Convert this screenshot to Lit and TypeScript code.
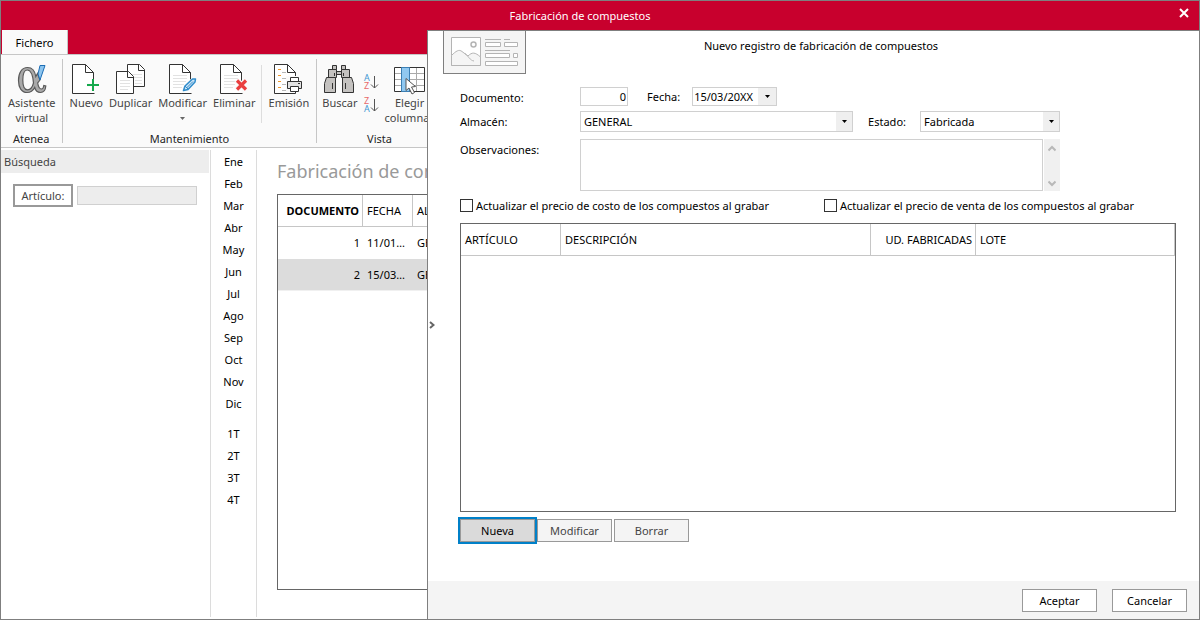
import { LitElement, html, svg, css } from "lit";
import { customElement, state } from "lit/decorators.js";

const openPage = svg`<path class="fill" d="M.5 .5h13l8 8v21h-21z"/><path class="ink" d="M21.5 17V8.5l-8-8H.5v29h22M13.5 .5v8h8"/>`;
const ruled = svg`<path class="rule" d="M4 11.5h14M4 14.5h14M4 17.5h13M4 20.5h11M4 23.5h9"/>`;

const icons: Record<string, unknown> = {
  alpha: html`<svg width="30" height="31" viewBox="0 0 30 31" aria-hidden="true">
    <path d="M10.500 3.500C15.500 3.500 18 7 18.800 12.500L20.500 9.500L23 16L20.700 19C21.300 23 22.500 25 24.500 25C26 25 26.500 24 26.800 21.500L28.800 22C28.500 26 26.500 28.500 23.500 28.500C20 28.500 18.500 26.500 17.700 23.500C16 26.800 13.500 28.500 10 28.500C4.500 28.500 1.500 23.500 1.500 16.500C1.500 8.500 5 3.500 10.500 3.500zM10.200 6C7 6 5.800 10 5.800 16C5.800 22 7.300 25.800 10.500 25.800C13.500 25.800 15.500 23 16.500 19C15.800 11 14.500 6 10.200 6z" fill="#a9a9a9" stroke="#5a5a5a" stroke-width="1.200" fill-rule="evenodd"/>
    <path d="M23 1.500h5L23 16l-2-6z" fill="#8cc4ee" stroke="#1c6db5"/>
  </svg>`,
  nuevo: html`<svg width="28" height="31" viewBox="0 0 28 31" aria-hidden="true">${openPage}
    <path d="M21 15v12M15 21h12" fill="none" stroke="#fafafa" stroke-width="4"/>
    <path d="M21 15v12M15 21h12" fill="none" stroke="#14a84b" stroke-width="2"/></svg>`,
  duplicar: html`<svg width="30" height="31" viewBox="0 0 30 31" aria-hidden="true">
    <path class="sheet" d="M11.500 .5h12l5 5v17h-17z"/><path class="ink" d="M22.500 .5v6h6"/>
    <path class="rule" d="M16 10.500h10M16 13.500h10M19 16.500h7M19 19.500h7"/>
    <path class="sheet" d="M.5 7.500h12l5 5v17h-17z"/><path class="ink" d="M11.500 7.500v6h6"/>
    <path class="rule" d="M4 16.500h10M4 19.500h10M4 22.500h10M4 25.500h8"/></svg>`,
  modificar: html`<svg width="28" height="31" viewBox="0 0 28 31" aria-hidden="true">${openPage}${ruled}
    <path d="M14.500 27l1.500-5 8-7 2.500 2.500-7.500 8z" fill="#fafafa" stroke="#fafafa" stroke-width="3"/>
    <path d="M14.500 26.500l1.500-4.500 7.500-7h3l-.5 3-7 7.500z" fill="#cfe6f7" stroke="#2f8ccb" stroke-width="1.500" stroke-linejoin="round"/>
    <path d="M17.500 24l6.500-6.500M16 22l3 3" stroke="#2f8ccb"/></svg>`,
  eliminar: html`<svg width="28" height="31" viewBox="0 0 28 31" aria-hidden="true">${openPage}${ruled}
    <path d="M16.500 16l10 10M26.500 16l-10 10" stroke="#fafafa" stroke-width="6"/>
    <path d="M17 16.500l9 9M26 16.500l-9 9" stroke="#ea3f3f" stroke-width="3.200"/></svg>`,
  emision: html`<svg width="29" height="31" viewBox="0 0 29 31" aria-hidden="true">
    <path class="sheet" d="M.5 .5h13l8 8v21h-21z"/><path class="ink" d="M13.500 .5v8h8"/>
    <path stroke="#f0992c" d="M4 5.500h3M4 11.500h3M4 17.500h3M4 23.500h3"/>
    <path class="rule dark" d="M8 8.500h4M8 14.500h6M8 20.500h4M8 26.500h4"/>
    <path d="M12 12h17v16h-17z" fill="#fafafa"/>
    <g fill="#fff" stroke="#333"><path d="M16.500 18v-4.500h8V18"/><path d="M13.500 17.500h14v7h-14z" fill="#e2e2e2"/><path d="M16.500 22.500h8v5h-8z"/><path d="M24 19.500h2"/></g></svg>`,
  buscar: html`<svg width="31" height="31" viewBox="0 0 31 31" aria-hidden="true">
    <g fill="#c4c2c0" stroke="#333"><path d="M12.500 7.500h5v3h-5z"/><path d="M8.500 1.500h4v4h-4zM17.500 1.500h4v4h-4z"/><path d="M4.500 5.500h8v8h-8zM17.500 5.500h8v8h-8z"/>
    <path d="M2.500 13.500h9v15H.5v-9zM27.500 13.500h-9v15h11v-9z"/><path d="M8.500 19v6M21.500 19v6M10.500 9v3M19.500 9v3"/></g></svg>`,
  columnas: html`<svg width="31" height="31" viewBox="0 0 31 31" aria-hidden="true">
    <path fill="#fff" d="M.5 3.500h30v24H.5z"/>
    <path class="grid" d="M1 9.500h29M1 15.500h29M1 21.500h29M22.500 4v23"/>
    <path class="ink" d="M.5 3.500h30v24H.5z"/>
    <path fill="#90c8f0" stroke="#3a7fb5" d="M7.500 3.500h8v24h-8z"/>
    <path fill="#fff" stroke="#555" d="M12 14.500v12l3-2.500 3 6 2.500-1.500-3-5.500 4-.5z"/></svg>`,
};

const sortIcon = (top: string, bottom: string) => {
  const tint = (c: string) => (c === "A" ? "#3f97d3" : "#e8696b");
  return html`<svg class="sort" width="15" height="18" viewBox="0 0 15 18" aria-hidden="true">
    <text x="0" y="8" font-size="9" fill=${tint(top)}>${top}</text>
    <text x="0" y="16" font-size="9" fill=${tint(bottom)}>${bottom}</text>
    <path d="M10.500 3v12M7 11.500l3.500 3.500 3.500-3.500" fill="none" stroke="#555"/></svg>`;
};

const caret = html`<svg class="caret" width="5" height="3" viewBox="0 0 5 3" aria-hidden="true"><path d="M0 0h5L2.500 3z"/></svg>`;

const MONTHS = ["Ene", "Feb", "Mar", "Abr", "May", "Jun", "Jul", "Ago", "Sep", "Oct", "Nov", "Dic"];
const QUARTERS = ["1T", "2T", "3T", "4T"];

@customElement("app-root")
export class AppRoot extends LitElement {
  @state() private selected = 2;
  private rows = [
    { id: 1, date: "11/01/20XX", store: "GENERAL" },
    { id: 2, date: "15/03/20XX", store: "GENERAL" },
  ];

  static styles = css`
    :host { display: block; font: 11px/15px "Noto Sans", "Open Sans", sans-serif; color: #000; }
    * { box-sizing: border-box; }
    button, input, select, textarea { font: inherit; color: inherit; margin: 0; border-radius: 0; }
    button { padding: 0; border: 0; background: none; }
    svg { display: block; flex: none; }
    .window { display: flex; flex-direction: column; height: 100vh; border: 1px solid #7f7f7f; background: #fff; }
    .titlebar { display: flex; align-items: center; height: 29px; flex: none; background: #c8002d; color: #fff; }
    .titlebar h1 { flex: 1; margin: 0; font: inherit; text-align: center; }
    .close { width: 40px; height: 24px; display: grid; place-items: center; align-self: start; padding-left: 9px; }
    .body { flex: 1; display: flex; min-height: 0; }

    .main { flex: 0 0 426px; min-width: 0; overflow: hidden; display: flex; flex-direction: column; }
    .tabs { background: #c8002d; height: 24px; flex: none; display: flex; padding-left: 1px; }
    .tab { width: 66px; height: 25px; background: #fafafa; border-right: 1px solid #c6c6c6; }
    .ribbon { display: flex; flex: none; height: 94px; border-top: 1px solid #c6c6c6; border-bottom: 1px solid #c6c6c6; background: #fafafa; }
    .group { display: flex; flex-direction: column; flex: none; margin: 4px 0; border-right: 1px solid #c6c6c6; }
    .tools { flex: 1; min-height: 0; display: flex; align-items: flex-start; padding: 5px 5px 0; gap: 2px; }
    .group h2 { margin: 0 0 -3px; font: inherit; text-align: center; color: #262626; }
    .assistant .tools { padding: 5px 4px 0 5px; }
    .view .tools { padding: 5px 5px 0 3px; }
    .tool { display: flex; flex-direction: column; align-items: center; color: #444; padding: 0 2px; text-align: center; }
    .tool .caret { fill: #666; margin-top: 7px; }
    .split { width: 1px; height: 58px; background: #ddd; margin: 1px 3px 0 1px; }
    .sorts { display: grid; gap: 5px; padding: 9px 2px 0; }
    .sort { overflow: visible; }

    .sheet { fill: #fff; stroke: #333; }
    .fill { fill: #fff; }
    .ink { fill: none; stroke: #333; }
    .rule { fill: none; stroke: #e2e2e2; }
    .dark { stroke: #b8b8b8; }
    .grid { fill: none; stroke: #aaa; }

    .content { flex: 1; display: flex; min-height: 0; padding: 2px 0 2px; }
    .search { flex: 0 0 209px; min-width: 0; padding-right: 1px; }
    .search h2 { margin: 0; font: inherit; color: #444; background: #ededed; height: 23px; padding: 4px 3px; }
    .filter { display: flex; gap: 4px; padding: 11px 12px; align-items: center; }
    .filter label { border: 2px solid #999; height: 23px; width: 60px; padding: 2px 0; text-align: center; color: #444; flex: none; }
    .filter input { flex: 1; min-width: 0; height: 19px; border: 1px solid #d0d0d0; background: #ededed; }
    .periods { flex: 0 0 47px; border: solid #dcdcdc; border-width: 0 1px; display: flex; flex-direction: column; }
    .periods button { height: 22px; flex: none; }
    .quarters { display: flex; flex-direction: column; padding-top: 8px; }
    .listing { flex: 1; min-width: 0; padding: 8px 0 27px 20px; display: flex; flex-direction: column; }
    .listing h2 { margin: 0 0 9px; font-size: 18px; line-height: 27px; font-weight: 400; color: #999; white-space: nowrap; overflow: hidden; }
    .frame { flex: 1; border: 1px solid #666; }
    .listing .frame { border-right: 0; }
    table { border-collapse: separate; border-spacing: 0; table-layout: fixed; width: 100%; }
    th { font-weight: 400; text-align: left; height: 32px; padding: 0 3px 0 4px; border: solid #c6c6c6; border-width: 0 1px 1px 0; white-space: nowrap; overflow: hidden; }
    td { height: 32px; padding: 0 4px; border-bottom: 1px solid #fff; white-space: nowrap; overflow: hidden; text-overflow: ellipsis; }
    .listing th:last-child, .listing td:last-child { border-right: 0; padding-right: 0; text-overflow: clip; }
    .num { text-align: right; padding-right: 3px; }
    .sorted { font-weight: 700; }
    .picked td { background: #dcdcdc; border-color: #f0f0f0; }
    .w-doc { width: 85px; }
    .w-date { width: 50px; }

    .panel { flex: 1; min-width: 0; position: relative; display: flex; flex-direction: column; border: solid #7f7f7f; border-width: 1px 0 0 1px; }
    .handle { position: absolute; left: 0; top: 0; bottom: 0; width: 8px; display: grid; place-items: center; }
    .head { display: grid; grid-template-columns: 83px 1fr 83px; padding-left: 15px; text-align: center; }
    .head h2 { margin: 0; font: inherit; padding-top: 7px; }
    .tile { height: 43px; background: #f5f5f5; border: solid #7f7f7f; border-width: 0 1px 1px; display: grid; place-items: center; padding-bottom: 2px; }
    .form { flex: 1; display: flex; flex-direction: column; padding: 13px 23px 39px 32px; min-height: 0; }
    .fields { display: grid; grid-template-columns: 120px minmax(0, 480px); row-gap: 5px; }
    .fields > label { padding-top: 3px; }
    .fields > .tall { padding-top: 5px; }
    .line { display: flex; align-items: center; }
    .box { border: 1px solid #d0d0d0; background: #fff; }
    .doc { width: 48px; height: 19px; text-align: right; padding: 0 1px; margin-right: 19px; }
    .date { display: flex; width: 85px; height: 19px; margin-left: 12px; }
    .date input { flex: 1; min-width: 0; border: 0; padding: 0 1px; background: none; }
    .date button { width: 18px; background: #efefef; display: grid; place-items: center; }
    .pick { display: grid; grid-template-columns: 1fr 16px; height: 21px; }
    .pick select { grid-area: 1 / 1 / 2 / 3; appearance: none; border: 0; background: none; padding: 0 3px; outline: 0; min-width: 0; }
    .pick i { grid-area: 1 / 2; background: #efefef; display: grid; place-items: center; pointer-events: none; }
    .store { flex: 1; margin-right: 15px; }
    .status { width: 140px; margin-left: 14px; }
    .notes { display: flex; gap: 1px; height: 52px; margin-top: 2px; }
    .notes textarea { flex: 1; resize: none; height: 52px; overflow: hidden; }
    .scroll { width: 16px; background: #f0f0f0; display: flex; flex-direction: column; justify-content: space-between; align-items: center; padding: 6px 0 4px; }
    .checks { display: grid; grid-template-columns: 364px 1fr; margin: 6px 0 10px; }
    .checks label { display: flex; align-items: center; gap: 3px; height: 16px; }
    .checks input { appearance: none; width: 13px; height: 13px; border: 1px solid #333; background: #fff; }
    .w-code { width: 100px; }
    .w-desc { width: 310px; }
    .w-qty { width: 105px; }
    .actions { display: flex; gap: 2px; padding-top: 7px; }
    .btn { width: 75px; height: 23px; border: 1px solid #999; }
    .actions .btn { background: #f4f4f4; color: #444; }
    .actions .focused { background: #dadada; color: #000; outline: 2px solid #0080c8; position: relative; }
    .foot { display: flex; justify-content: flex-end; gap: 15px; background: #f4f4f4; height: 38px; flex: none; padding: 8px 12px 0 0; }
    .foot .btn { background: #fff; }
  `;

  private tool(icon: string, text: string, extra: unknown = "") {
    return html`<button class="tool">${icons[icon]}<span>${text}</span>${extra}</button>`;
  }

  render() {
    return html`
      <div class="window">
        <header class="titlebar">
          <h1>Fabricación de compuestos</h1>
          <button class="close" aria-label="Cerrar">
            <svg width="10" height="10" viewBox="0 0 10 10"><path d="M1 1l8 8M9 1l-8 8" stroke="#fff" stroke-width="2"/></svg>
          </button>
        </header>
        <div class="body">
          <main class="main">
            <nav class="tabs"><button class="tab">Fichero</button></nav>
            <div class="ribbon">
              <section class="group assistant">
                <div class="tools"><button class="tool">${icons.alpha}<span>Asistente<br />virtual</span></button></div>
                <h2>Atenea</h2>
              </section>
              <section class="group">
                <div class="tools">
                  ${this.tool("nuevo", "Nuevo")} ${this.tool("duplicar", "Duplicar")}
                  ${this.tool("modificar", "Modificar", caret)} ${this.tool("eliminar", "Eliminar")}
                  <span class="split"></span>
                  ${this.tool("emision", "Emisión")}
                </div>
                <h2>Mantenimiento</h2>
              </section>
              <section class="group view">
                <div class="tools">
                  ${this.tool("buscar", "Buscar")}
                  <div class="sorts">
                    <button aria-label="Orden ascendente">${sortIcon("A", "Z")}</button>
                    <button aria-label="Orden descendente">${sortIcon("Z", "A")}</button>
                  </div>
                  <button class="tool">${icons.columnas}<span>Elegir<br />columnas</span></button>
                </div>
                <h2>Vista</h2>
              </section>
            </div>
            <div class="content">
              <aside class="search">
                <h2>Búsqueda</h2>
                <div class="filter"><label for="article">Artículo:</label><input id="article" /></div>
              </aside>
              <nav class="periods">
                ${MONTHS.map((m) => html`<button>${m}</button>`)}
                <div class="quarters">${QUARTERS.map((q) => html`<button>${q}</button>`)}</div>
              </nav>
              <section class="listing">
                <h2>Fabricación de compuestos</h2>
                <div class="frame">
                  <table>
                    <thead>
                      <tr><th class="w-doc num sorted">DOCUMENTO</th><th class="w-date">FECHA</th><th>ALMACÉN</th></tr>
                    </thead>
                    <tbody>
                      ${this.rows.map((r) => html`
                        <tr class=${r.id === this.selected ? "picked" : ""} @click=${() => (this.selected = r.id)}>
                          <td class="num">${r.id}</td><td>${r.date}</td><td>${r.store}</td>
                        </tr>`)}
                    </tbody>
                  </table>
                </div>
              </section>
            </div>
          </main>

          <section class="panel">
            <div class="head">
              <div class="tile">
                <svg width="67" height="29" viewBox="0 0 67 29" aria-hidden="true">
                  <g fill="#fff" stroke="#b4b4b4">
                    <path d="M.5 .5h29v28h-29z"/>
                    <path fill="#f5f5f5" d="M.5 18.500C5 14 8 12 11 14.500L17 19c4-4 7-4 12.500 1v8.500H.5zM14 16.500c3 2 5 7 9 7.500"/>
                    <circle cx="22.500" cy="7.500" r="2.500" stroke-width="1.500"/>
                    <path d="M34.500 5.500h15v4h-15zM53.500 5.500h13v4h-13zM34.500 16.500h24v4h-24zM62.500 16.500h4v4h-4zM34.500 24.500h32v4h-32z"/>
                    <path d="M34 2.500h16M53 2.500h6M34 13.500h25"/>
                  </g>
                </svg>
              </div>
              <h2>Nuevo registro de fabricación de compuestos</h2>
            </div>
            <button class="handle" aria-label="Mostrar">
              <svg width="6" height="8" viewBox="0 0 6 8"><path d="M1 1l3.500 3L1 7" fill="none" stroke="#666" stroke-width="2"/></svg>
            </button>
            <div class="form">
              <div class="fields">
                <label for="doc">Documento:</label>
                <div class="line">
                  <input id="doc" class="box doc" value="0" />
                  <label for="date">Fecha:</label>
                  <div class="box date"><input id="date" value="15/03/20XX" /><button aria-label="Calendario">${caret}</button></div>
                </div>
                <label for="store">Almacén:</label>
                <div class="line">
                  <div class="box pick store"><select id="store"><option>GENERAL</option></select><i>${caret}</i></div>
                  <label for="status">Estado:</label>
                  <div class="box pick status"><select id="status"><option>Fabricada</option></select><i>${caret}</i></div>
                </div>
                <label class="tall" for="notes">Observaciones:</label>
                <div class="notes">
                  <textarea id="notes" class="box"></textarea>
                  <div class="scroll">
                    <svg width="8" height="7" viewBox="0 0 8 7"><path d="M.5 5.500L4 2l3.500 3.500" fill="none" stroke="#b8b8b8" stroke-width="2"/></svg>
                    <svg width="8" height="7" viewBox="0 0 8 7"><path d="M.5 1.500L4 5l3.500-3.500" fill="none" stroke="#b8b8b8" stroke-width="2"/></svg>
                  </div>
                </div>
              </div>
              <div class="checks">
                <label><input type="checkbox" />Actualizar el precio de costo de los compuestos al grabar</label>
                <label><input type="checkbox" />Actualizar el precio de venta de los compuestos al grabar</label>
              </div>
              <div class="frame">
                <table>
                  <thead>
                    <tr><th class="w-code">ARTÍCULO</th><th class="w-desc">DESCRIPCIÓN</th><th class="w-qty num">UD. FABRICADAS</th><th>LOTE</th></tr>
                  </thead>
                </table>
              </div>
              <div class="actions">
                <button class="btn focused">Nueva</button>
                <button class="btn">Modificar</button>
                <button class="btn">Borrar</button>
              </div>
            </div>
            <footer class="foot"><button class="btn">Aceptar</button><button class="btn">Cancelar</button></footer>
          </section>
        </div>
      </div>
    `;
  }
}
